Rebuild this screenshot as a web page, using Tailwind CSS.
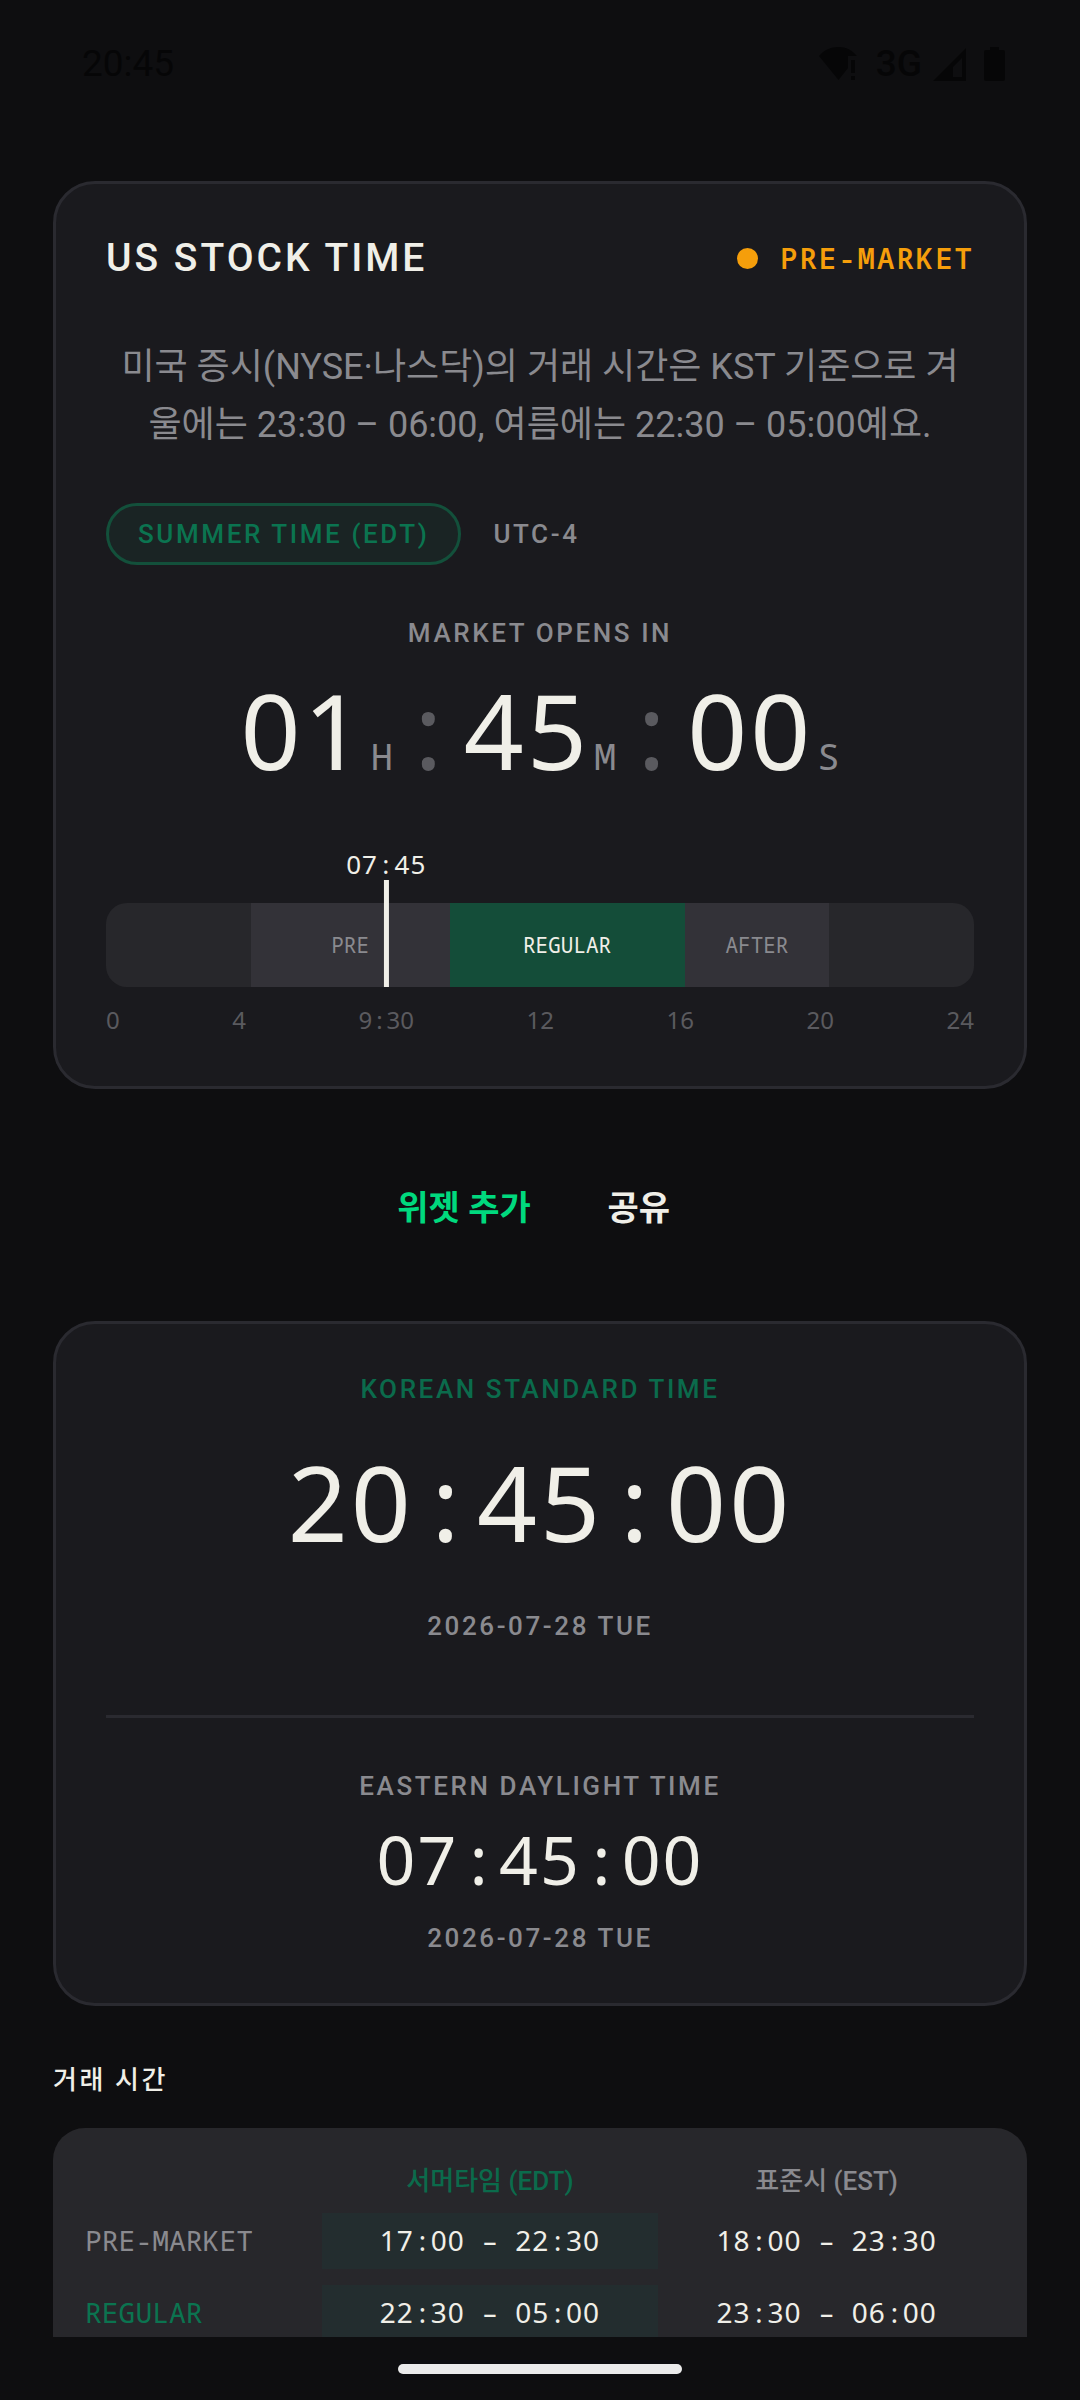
<!DOCTYPE html>
<html lang="ko">
<head>
    <meta charset="UTF-8">
    <meta name="viewport" content="width=device-width, initial-scale=1.0">
    <title>US Stock Time</title>
    <script src="https://cdn.jsdelivr.net/npm/@tailwindcss/browser@4"></script>
</head>
<body class="h-screen flex flex-col overflow-hidden bg-[#0e0e10] text-[#f0efe8] font-['Roboto','Noto_Sans_CJK_KR',sans-serif]">
    <!-- status bar -->
    <header class="h-[128px] shrink-0 pl-[82px] pr-[75px] flex items-center justify-between text-[#060607]">
        <span class="text-[37px] leading-[44px]">20:45</span>
        <div class="flex items-center">
            <svg class="w-[38px] h-[34px]" viewBox="0 0 38 34" fill="currentColor">
                <path d="M0 9C5 3 12 0 19.500 0S33 3 38 9H29V21L19.500 33Z"/>
                <path d="M32 13h4v13h-4zM32 29h4v4h-4z"/>
            </svg>
            <span class="ml-[19px] text-[37px] leading-[44px] font-medium">3G</span>
            <svg class="ml-[11px] w-[33px] h-[33px]" viewBox="0 0 33 33" fill="currentColor">
                <path fill-rule="evenodd" d="M33 0V33H0ZM29 10L20 19V29H29Z"/>
            </svg>
            <svg class="ml-[18px] w-[21px] h-[34px]" viewBox="0 0 21 34" fill="currentColor">
                <path d="M6 0h9v3h4a2 2 0 0 1 2 2v27a2 2 0 0 1-2 2H2a2 2 0 0 1-2-2V5a2 2 0 0 1 2-2h4z"/>
            </svg>
        </div>
    </header>

    <main class="flex-1 min-h-0 overflow-hidden px-[53px] pt-[53px]">
        <section class="rounded-[42px] border-[3px] border-[#2a2a30] bg-[#1a1a1e] p-[50px]">
            <div class="flex items-center justify-between">
                <h1 class="text-[39px] leading-[48px] font-medium tracking-[3px]">US STOCK TIME</h1>
                <div class="flex items-center gap-[22px] text-[#f59e0b]">
                    <span class="size-[21px] rounded-full bg-[#f59e0b]"></span>
                    <span class="text-[29px] leading-[46px] font-semibold tracking-[2px] font-['Noto_Sans_Mono','Noto_Sans',monospace]">PRE-MARKET</span>
                </div>
            </div>

            <p class="mt-[56px] text-center text-[36px] leading-[58px] text-[#8a8a8f] break-all">미국 증시(NYSE·나스닥)의 거래 시간은 KST 기준으로 겨울에는 23:30 – 06:00, 여름에는 22:30 – 05:00예요.</p>

            <div class="mt-[49px] flex items-center gap-[32px] text-[26px] leading-[30px] font-medium tracking-widest">
                <span class="h-[62px] px-[29px] flex items-center rounded-full border-[3px] border-[#13503b] bg-[#1a2424] text-[#0b7450]">SUMMER TIME (EDT)</span>
                <span class="text-[#8a8a8f]">UTC-4</span>
            </div>

            <h2 class="mt-[53px] text-center text-[26px] leading-[30px] font-medium tracking-widest text-[#8a8a8f]">MARKET OPENS IN</h2>
            <div class="mt-[19px] flex justify-center items-baseline gap-[4px] text-[105px] leading-[126px] font-['Noto_Sans',sans-serif]">
                <span class="tracking-[3px]">01</span><span class="text-[37px] leading-[40px] text-[#8a8a8f] font-['Noto_Sans_Mono',monospace]">H</span>
                <span class="w-[63px] text-center text-[#5a5a5f]">:</span>
                <span class="tracking-[3px]">45</span><span class="text-[37px] leading-[40px] text-[#8a8a8f] font-['Noto_Sans_Mono',monospace]">M</span>
                <span class="w-[63px] text-center text-[#5a5a5f]">:</span>
                <span class="tracking-[3px]">00</span><span class="text-[37px] leading-[40px] text-[#8a8a8f] font-['Noto_Sans_Mono',monospace]">S</span>
            </div>

            <!-- trading day -->
            <div class="relative mt-[55px] pt-[55px] font-['Noto_Sans_Mono','Noto_Sans',monospace]">
                <div class="h-[84px] flex overflow-hidden rounded-[21px] bg-[#27272b] text-[21px] leading-[84px] text-center text-[#8a8a8f]">
                    <div style="width:16.667%"></div>
                    <div class="bg-[#333238]" style="width:22.917%">PRE</div>
                    <div class="bg-[#144d39] text-[#f0efe8]" style="width:27.083%">REGULAR</div>
                    <div class="bg-[#333238]" style="width:16.667%">AFTER</div>
                </div>
                <div class="absolute inset-y-0 flex flex-col items-center -translate-x-1/2" style="left:32.292%">
                    <span class="text-[26px] leading-[32px] tracking-[1px] font-['Noto_Sans',sans-serif]">07<span class="font-['Noto_Sans_Mono',monospace]">:</span>45</span>
                    <span class="w-[5px] flex-1 bg-[#f0efe8]"></span>
                </div>
            </div>
            <div class="mt-[17px] flex justify-between text-[24px] leading-[32px] text-[#5a5a5f] font-['Noto_Sans',sans-serif]">
                <span>0</span><span>4</span><span>9<span class="font-['Noto_Sans_Mono',monospace]">:</span>30</span><span>12</span><span>16</span><span>20</span><span>24</span>
            </div>
        </section>

        <div class="h-[232px] pt-[6px] flex items-center justify-center text-[34px] leading-[50px] font-bold">
            <button type="button" class="h-[126px] px-[32px] text-[#00d97e]">위젯 추가</button>
            <button type="button" class="h-[126px] min-w-[152px] px-[32px]">공유</button>
        </div>

        <section class="rounded-[42px] border-[3px] border-[#2a2a30] bg-[#1a1a1e] p-[50px] text-center">
            <h2 class="text-[26px] leading-[30px] font-medium tracking-widest text-[#0b6b4c]">KOREAN STANDARD TIME</h2>
            <div class="mt-[35px] text-[105px] leading-[126px] tracking-[3px] font-['Noto_Sans',sans-serif]">20<span class="tracking-normal font-['Noto_Sans_Mono',monospace]">:</span>45<span class="tracking-normal font-['Noto_Sans_Mono',monospace]">:</span>00</div>
            <div class="mt-[46px] text-[26px] leading-[30px] font-medium tracking-widest text-[#8a8a8f]">2026-07-28 TUE</div>
            <hr class="mt-[74px] border-0 h-[3px] bg-[#2a2a30]">
            <h2 class="mt-[53px] text-[26px] leading-[30px] font-medium tracking-widest text-[#8a8a8f]">EASTERN DAYLIGHT TIME</h2>
            <div class="mt-[18px] text-[68px] leading-[80px] tracking-[2px] font-['Noto_Sans',sans-serif]">07<span class="tracking-normal font-['Noto_Sans_Mono',monospace]">:</span>45<span class="tracking-normal font-['Noto_Sans_Mono',monospace]">:</span>00</div>
            <div class="mt-[24px] text-[26px] leading-[30px] font-medium tracking-widest text-[#8a8a8f]">2026-07-28 TUE</div>
        </section>

        <h2 class="mt-[59px] text-[26px] leading-[30px] font-medium tracking-widest">거래 시간</h2>
        <div class="mt-[33px] rounded-[32px] bg-[#27272b] px-[32px] pt-[27px] pb-[32px]">
            <table class="w-full table-fixed text-[28px] leading-[54px] text-center">
                <thead>
                    <tr class="text-[26px] leading-[48px] text-[#8a8a8f]">
                        <th class="w-[26%]"></th>
                        <th class="w-[37%] pt-[2px] font-medium text-[#0b6b4c]" scope="col">서머타임 (EDT)</th>
                        <th class="w-[37%] pt-[2px] font-medium" scope="col">표준시 (EST)</th>
                    </tr>
                </thead>
                <tbody class="font-['Noto_Sans',sans-serif]">
                    <tr>
                        <th class="pb-[2px] text-left font-normal text-[#8a8a8f] font-['Noto_Sans_Mono',monospace]" scope="row">PRE-MARKET</th>
                        <td class="py-[8px]"><div class="pb-[2px] bg-[#232d2f] tracking-[1px]">17<span class="tracking-normal font-['Noto_Sans_Mono',monospace]">:</span>00<span class="tracking-normal font-['Noto_Sans_Mono',monospace]"> – </span>22<span class="tracking-normal font-['Noto_Sans_Mono',monospace]">:</span>30</div></td>
                        <td class="py-[8px]"><div class="pb-[2px] tracking-[1px]">18<span class="tracking-normal font-['Noto_Sans_Mono',monospace]">:</span>00<span class="tracking-normal font-['Noto_Sans_Mono',monospace]"> – </span>23<span class="tracking-normal font-['Noto_Sans_Mono',monospace]">:</span>30</div></td>
                    </tr>
                    <tr>
                        <th class="pb-[2px] text-left font-normal text-[#0b7450] font-['Noto_Sans_Mono',monospace]" scope="row">REGULAR</th>
                        <td class="py-[8px]"><div class="pb-[2px] bg-[#232d2f] tracking-[1px]">22<span class="tracking-normal font-['Noto_Sans_Mono',monospace]">:</span>30<span class="tracking-normal font-['Noto_Sans_Mono',monospace]"> – </span>05<span class="tracking-normal font-['Noto_Sans_Mono',monospace]">:</span>00</div></td>
                        <td class="py-[8px]"><div class="pb-[2px] tracking-[1px]">23<span class="tracking-normal font-['Noto_Sans_Mono',monospace]">:</span>30<span class="tracking-normal font-['Noto_Sans_Mono',monospace]"> – </span>06<span class="tracking-normal font-['Noto_Sans_Mono',monospace]">:</span>00</div></td>
                    </tr>
                </tbody>
            </table>
        </div>
    </main>

    <!-- gesture bar -->
    <footer class="h-[63px] shrink-0 flex items-center justify-center">
        <div class="w-[284px] h-[10px] rounded-full bg-[#ebebeb]"></div>
    </footer>
</body>
</html>
